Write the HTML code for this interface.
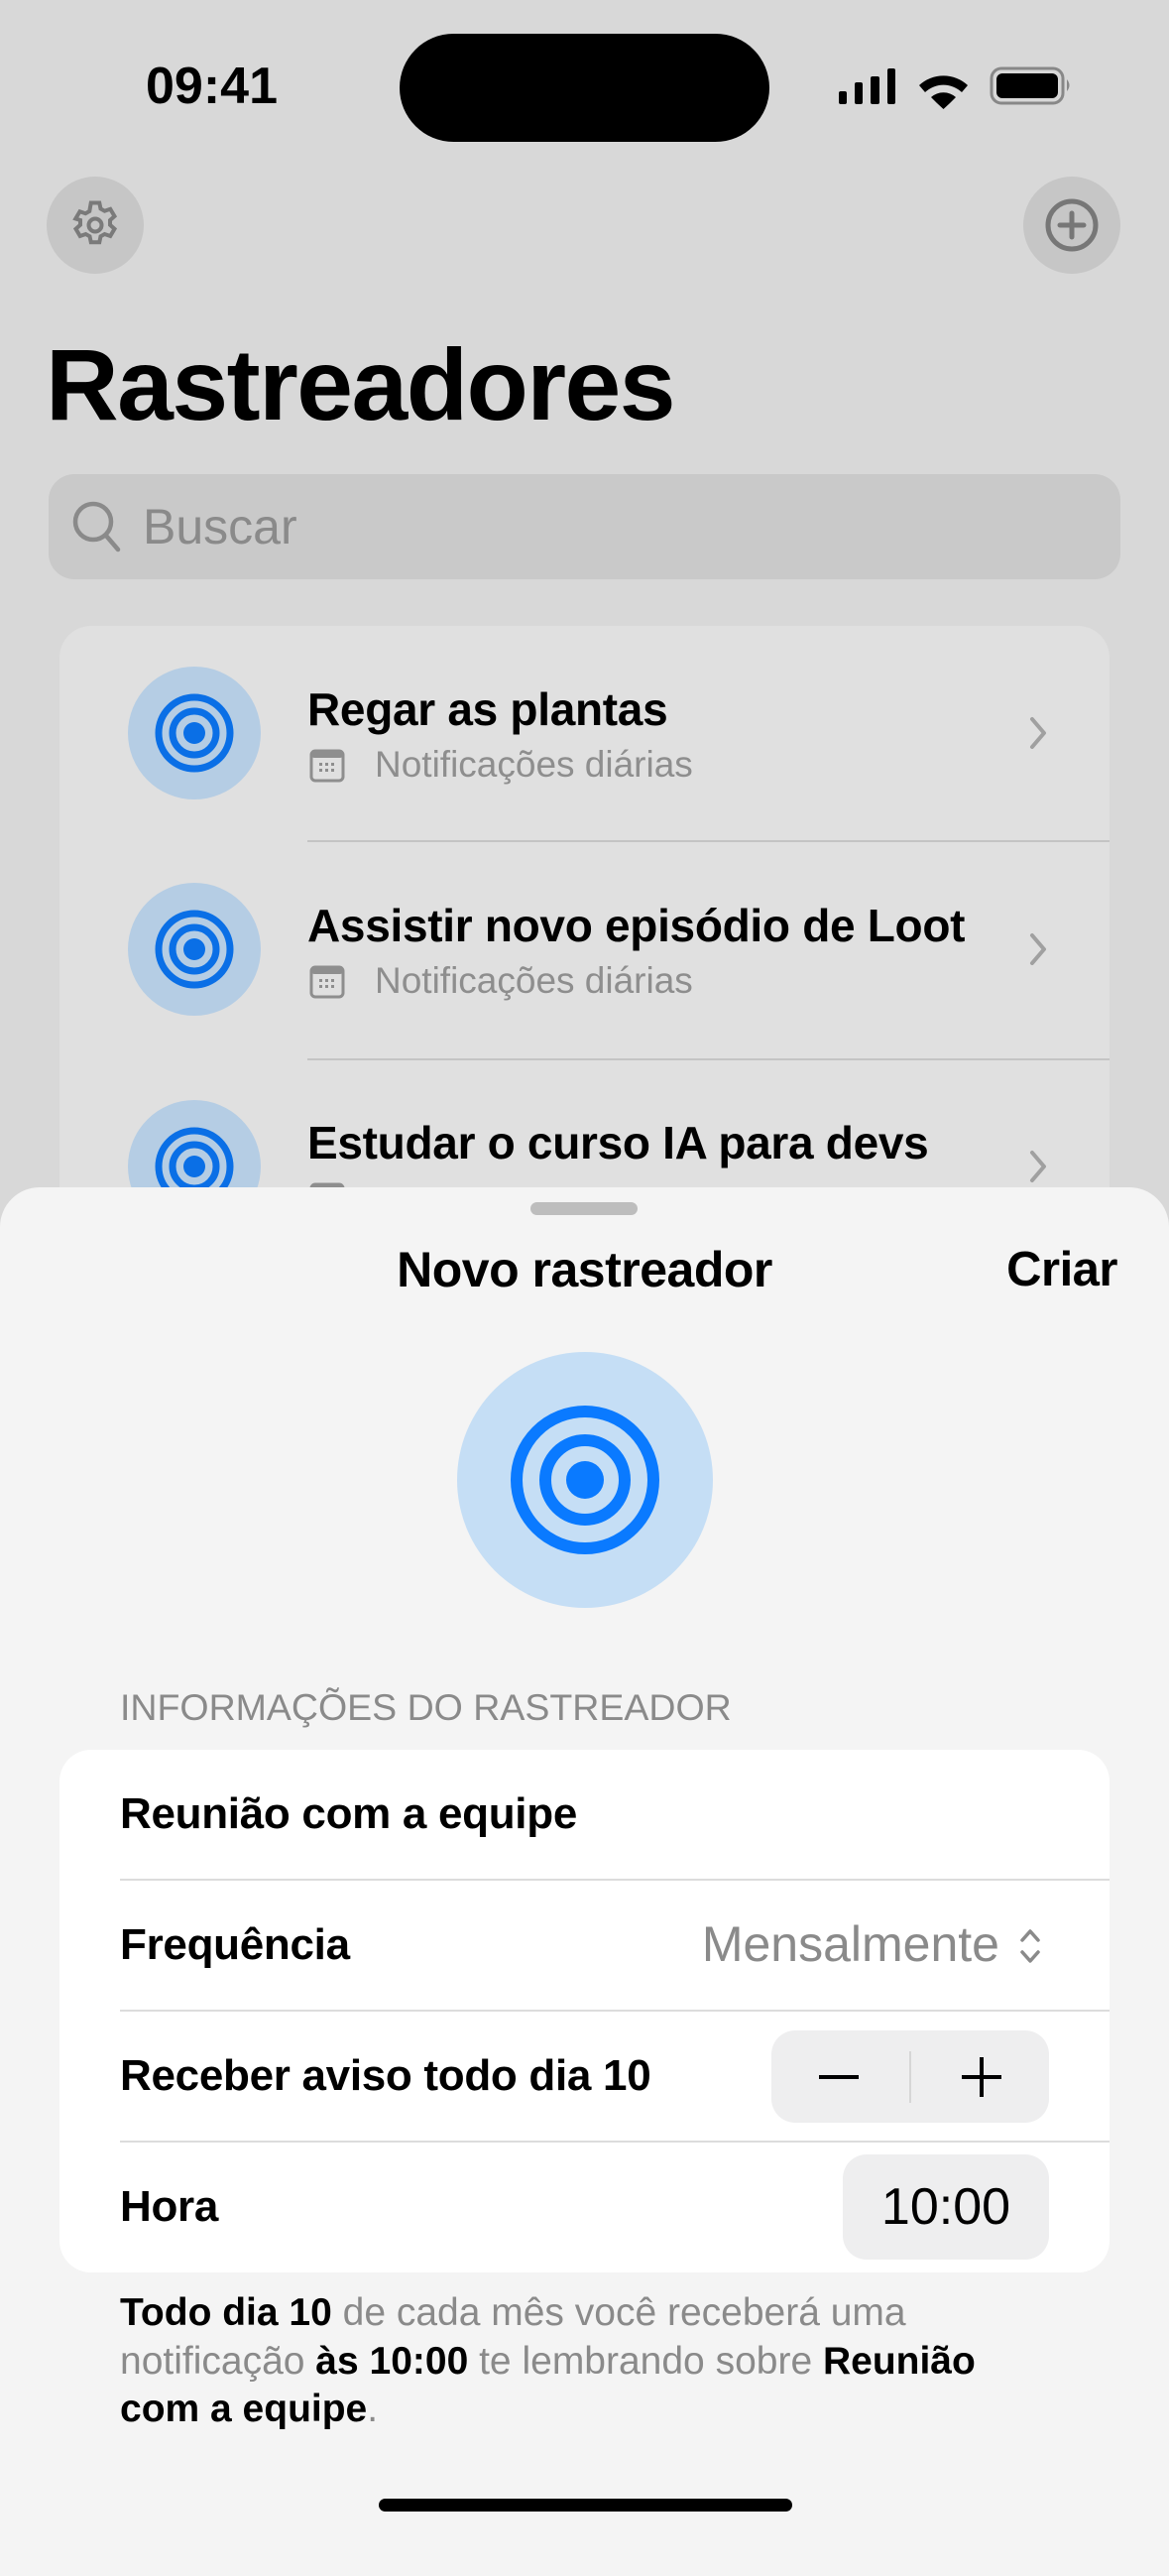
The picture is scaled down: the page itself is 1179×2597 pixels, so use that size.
<!DOCTYPE html>
<html><head><meta charset="utf-8"><style>
*{margin:0;padding:0;box-sizing:border-box}
body{width:1179px;height:2556px;background:#d8d8d8;position:relative;overflow:hidden;font-family:"Liberation Sans",sans-serif;color:#000}
.a{position:absolute}
.t{position:absolute;white-space:nowrap}
.row-title{font-size:46px;font-weight:700;letter-spacing:-0.3px}
.sub{font-size:37px;color:#8e8e8e}
.sep{position:absolute;height:2px;background:#c4c4c4}
.fs{position:absolute;height:2px;background:#dcdcdc;left:121px;right:60px}
.lbl{font-size:44px;font-weight:700;letter-spacing:-0.3px}
</style></head><body>
<div class="t" style="left:147px;top:57px;font-size:52px;font-weight:700">09:41</div>
<div class="a" style="left:403px;top:34px;width:373px;height:109px;background:#000;border-radius:55px"></div>
<svg class="a" style="left:840px;top:60px" width="250" height="52" viewBox="840 60 250 52">
<rect x="846" y="92" width="8" height="13" rx="2"/><rect x="862" y="83" width="8" height="22" rx="2"/><rect x="878" y="77" width="9" height="28" rx="2"/><rect x="895" y="69" width="8" height="36" rx="2"/>
<path d="M927 86 A36 36 0 0 1 976 86 L970 93 A27 27 0 0 0 933 93 Z"/><path d="M939 98 A19 19 0 0 1 964 98 L958 104 A10 10 0 0 0 945 104 Z"/><path d="M945 104 L951.5 97 L958 104 L951.5 110 Z"/>
<rect x="1000" y="69" width="72" height="35" rx="10" fill="none" stroke="#888" stroke-width="3"/><rect x="1005" y="74" width="62" height="25" rx="6"/><path d="M1076 80 Q1081 86 1076 92Z" fill="#888"/>
</svg>
<div class="a" style="left:47px;top:178px;width:98px;height:98px;border-radius:50%;background:#c6c6c6"></div>
<svg class="a" style="left:66px;top:197px" width="60" height="60" viewBox="0 0 24 24" fill="none" stroke="#7a7a7a" stroke-width="1.6"><path d="M10.3 3h3.4l.5 2.4 1.6.9 2.3-.8 1.7 2.9-1.8 1.6v1.9l1.8 1.6-1.7 2.9-2.3-.8-1.6.9-.5 2.4h-3.4l-.5-2.4-1.6-.9-2.3.8-1.7-2.9 1.8-1.6v-1.9L4.1 9.4l1.7-2.9 2.3.8 1.6-.9z"/><circle cx="12" cy="12" r="2.6"/></svg>
<div class="a" style="left:1032px;top:178px;width:98px;height:98px;border-radius:50%;background:#c6c6c6"></div>
<svg class="a" style="left:1051px;top:197px" width="60" height="60" viewBox="0 0 60 60" fill="none" stroke="#777" stroke-width="5"><circle cx="30" cy="30" r="24"/><path d="M30 18v24M18 30h24" stroke-linecap="round"/></svg>
<div class="t" style="left:46px;top:330px;font-size:102px;font-weight:700;letter-spacing:-1.5px">Rastreadores</div>
<div class="a" style="left:49px;top:478px;width:1081px;height:106px;border-radius:26px;background:#c9c9c9"></div>
<svg class="a" style="left:70px;top:502px" width="56" height="60" viewBox="0 0 56 60" fill="none" stroke="#8a8a8a" stroke-width="4.5" stroke-linecap="round"><circle cx="24" cy="24" r="18"/><path d="M37 38l12 14"/></svg>
<div class="t" style="left:144px;top:502px;font-size:50px;color:#8a8a8a">Buscar</div>
<div class="a" style="left:60px;top:631px;width:1059px;height:700px;border-radius:32px;background:#e0e0e0"></div>
<svg width="0" height="0" style="position:absolute"><defs><g id="tg"><circle r="67" fill="#b5cde4"/><circle r="36" fill="none" stroke="#0a6fe6" stroke-width="7"/><circle r="22" fill="none" stroke="#0a6fe6" stroke-width="7"/><circle r="11" fill="#0a6fe6"/></g>
<g id="cal"><rect x="1" y="2" width="32" height="30" rx="4" fill="none" stroke="#8e8e8e" stroke-width="3"/><rect x="1" y="2" width="32" height="7" rx="3" fill="#8e8e8e"/><g fill="#8e8e8e"><rect x="9" y="14" width="3" height="3"/><rect x="15" y="14" width="3" height="3"/><rect x="21" y="14" width="3" height="3"/><rect x="9" y="20" width="3" height="3"/><rect x="15" y="20" width="3" height="3"/><rect x="21" y="20" width="3" height="3"/></g></g>
<path id="chv" d="M0 0 L12 14 L0 28" fill="none" stroke="#a0a0a0" stroke-width="4" stroke-linecap="round" stroke-linejoin="round"/></defs></svg>
<svg class="a" style="left:0;top:600px" width="1179" height="620" viewBox="0 600 1179 620">
<use href="#tg" x="196" y="739"/><use href="#tg" x="196" y="957"/><use href="#tg" x="196" y="1176"/>
<use href="#cal" x="313" y="755"/><use href="#cal" x="313" y="973"/><use href="#cal" x="313" y="1192"/>
<use href="#chv" x="1041" y="725"/><use href="#chv" x="1041" y="943"/><use href="#chv" x="1041" y="1162"/>
</svg>
<div class="t row-title" style="left:310px;top:688px">Regar as plantas</div>
<div class="t sub" style="left:378px;top:750px">Notificações diárias</div>
<div class="sep" style="left:310px;right:60px;top:847px"></div>
<div class="t row-title" style="left:310px;top:906px">Assistir novo episódio de Loot</div>
<div class="t sub" style="left:378px;top:968px">Notificações diárias</div>
<div class="sep" style="left:310px;right:60px;top:1067px"></div>
<div class="t row-title" style="left:310px;top:1125px">Estudar o curso IA para devs</div>
<div class="a" style="left:0;top:1197px;width:1179px;height:1400px;border-radius:40px 40px 0 0;background:#f4f4f4"></div>
<div class="a" style="left:535px;top:1212px;width:108px;height:13px;border-radius:7px;background:#bdbdbd"></div>
<div class="t" style="left:0;width:1179px;text-align:center;top:1251px;font-size:50px;font-weight:700;letter-spacing:-0.5px">Novo rastreador</div>
<div class="t" style="right:52px;top:1252px;font-size:49px;font-weight:700;letter-spacing:-0.5px">Criar</div>
<svg class="a" style="left:461px;top:1363px" width="258" height="258" viewBox="-129 -129 258 258"><circle r="129" fill="#c5def5"/><circle r="69" fill="none" stroke="#0a7aff" stroke-width="12"/><circle r="40" fill="none" stroke="#0a7aff" stroke-width="12"/><circle r="19" fill="#0a7aff"/></svg>
<div class="t" style="left:121px;top:1700px;font-size:37.5px;color:#8a8a8a">INFORMAÇÕES DO RASTREADOR</div>
<div class="a" style="left:60px;top:1764px;width:1059px;height:527px;border-radius:32px;background:#fff"></div>
<div class="t lbl" style="left:121px;top:1804px">Reunião com a equipe</div>
<div class="fs" style="top:1894px"></div>
<div class="t lbl" style="left:121px;top:1936px">Frequência</div>
<div class="t" style="right:171px;top:1931px;font-size:50px;color:#8a8a8a">Mensalmente</div>
<svg class="a" style="left:1024px;top:1940px" width="30" height="44" viewBox="0 0 30 44" fill="none" stroke="#8a8a8a" stroke-width="3.5" stroke-linecap="round" stroke-linejoin="round"><path d="M7 16l8-9 8 9M7 28l8 9 8-9"/></svg>
<div class="fs" style="top:2026px"></div>
<div class="t lbl" style="left:121px;top:2068px">Receber aviso todo dia 10</div>
<div class="a" style="left:778px;top:2047px;width:280px;height:93px;border-radius:24px;background:#eeeeef"></div>
<div class="a" style="left:917px;top:2068px;width:2px;height:52px;background:#d6d6d6"></div>
<div class="a" style="left:826px;top:2092px;width:40px;height:4px;background:#000"></div>
<div class="a" style="left:970px;top:2092px;width:40px;height:4px;background:#000"></div>
<div class="a" style="left:988px;top:2074px;width:4px;height:40px;background:#000"></div>
<div class="fs" style="top:2158px"></div>
<div class="t lbl" style="left:121px;top:2200px">Hora</div>
<div class="a" style="left:850px;top:2172px;width:208px;height:106px;border-radius:24px;background:#eeeeef"></div>
<div class="t" style="left:850px;width:208px;text-align:center;top:2195px;font-size:52px">10:00</div>
<div class="a" style="left:121px;top:2308px;width:1040px;font-size:39px;line-height:48.5px;color:#8a8a8a"><b style="color:#000">Todo dia 10</b> de cada mês você receberá uma<br>notificação <b style="color:#000">às 10:00</b> te lembrando sobre <b style="color:#000">Reunião<br>com a equipe</b>.</div>
<div class="a" style="left:382px;top:2519px;width:417px;height:13px;border-radius:7px;background:#000"></div>
</body></html>
